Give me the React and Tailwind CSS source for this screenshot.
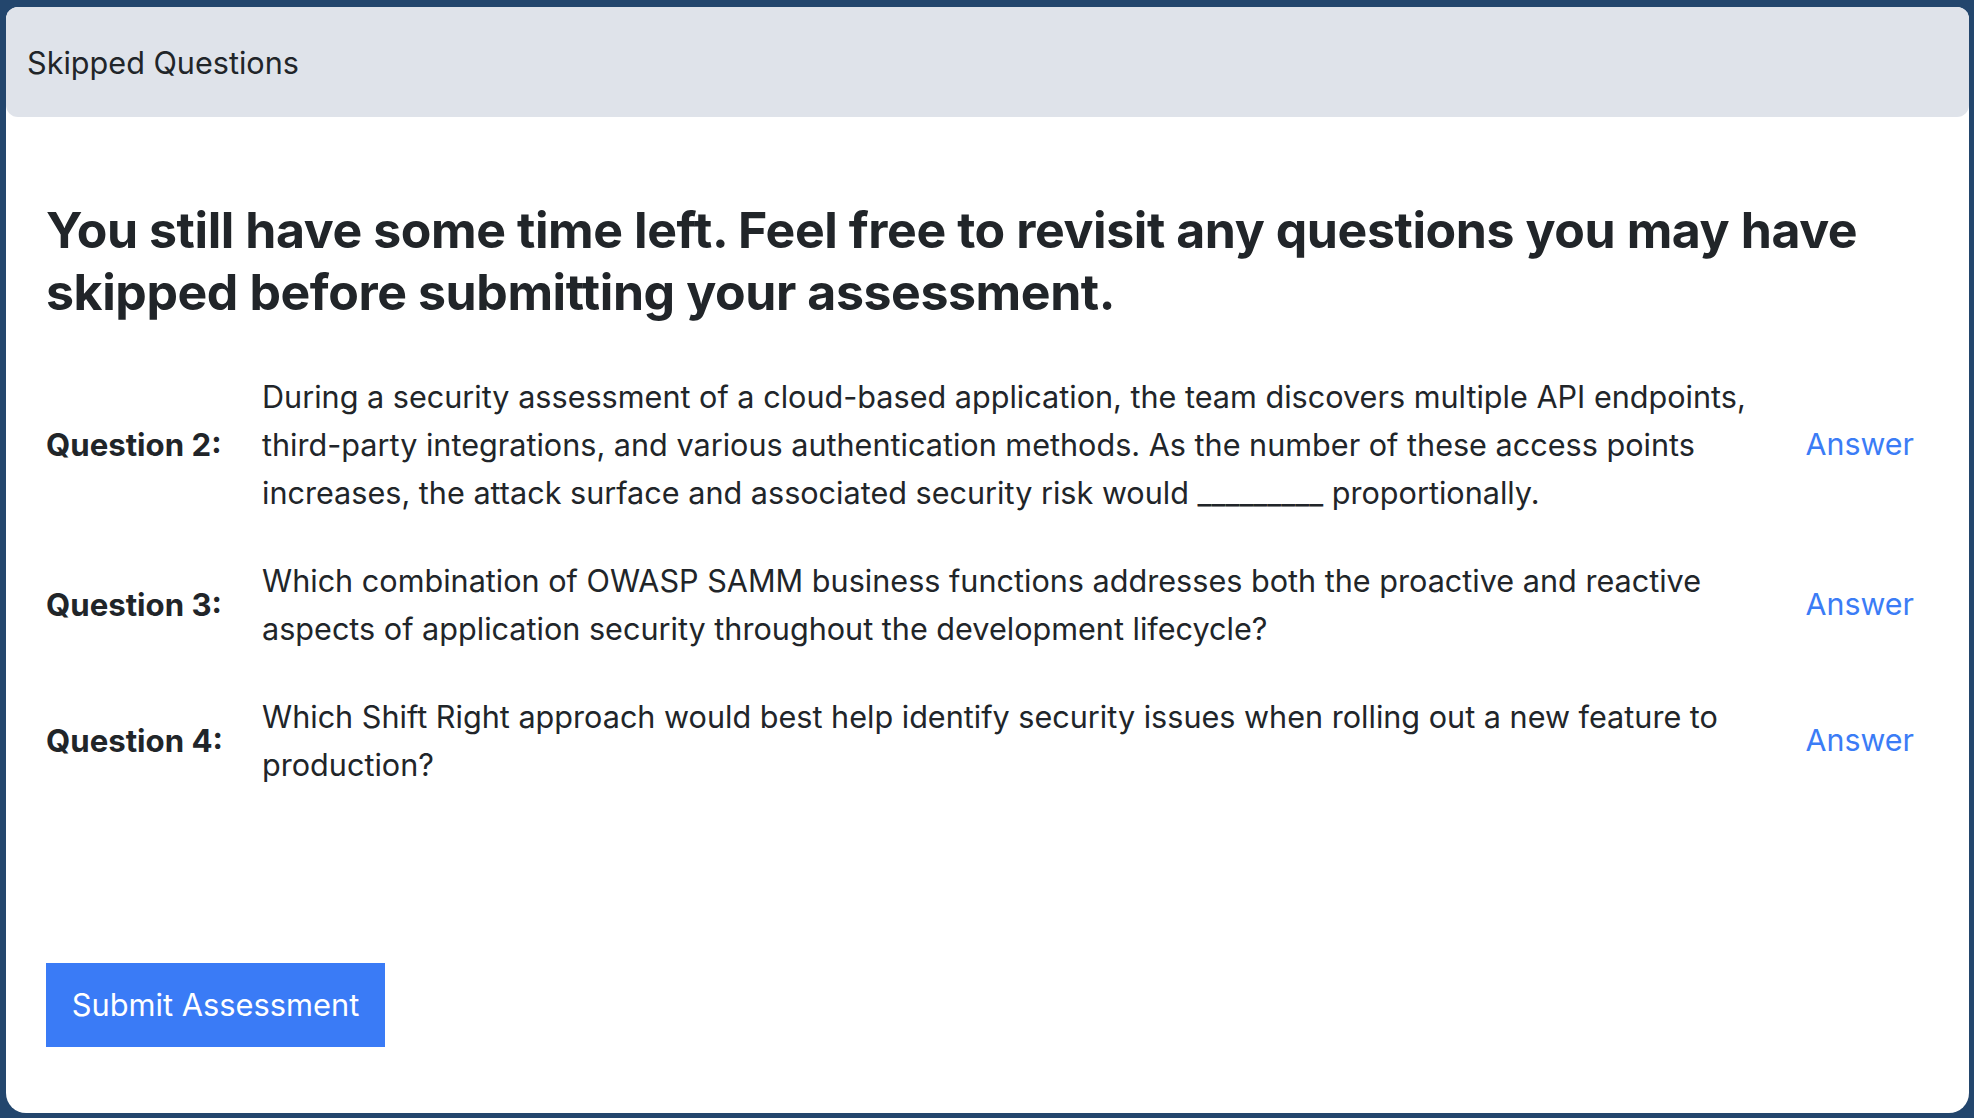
export default function App() {
  const rows = [
    {
      label: "Question 2:",
      text: "During a security assessment of a cloud-based application, the team discovers multiple API endpoints, third-party integrations, and various authentication methods. As the number of these access points increases, the attack surface and associated security risk would _________ proportionally.",
    },
    {
      label: "Question 3:",
      text: "Which combination of OWASP SAMM business functions addresses both the proactive and reactive aspects of application security throughout the development lifecycle?",
    },
    {
      label: "Question 4:",
      text: "Which Shift Right approach would best help identify security issues when rolling out a new feature to production?",
    },
  ];
  return (
    <div
      className="h-[1118px] w-full bg-[#23466d] pt-[7px] pl-[6px] pr-[5px] pb-[5px] flex"
      style={{ fontFamily: "Inter, 'Noto Sans', sans-serif" }}
    >
      <div className="flex-1 bg-white rounded-t-[12px] rounded-b-[20px] flex flex-col text-[#212529]">
        <div className="h-[110px] bg-[#dfe3ea] rounded-[12px] flex items-center pl-[21px] pt-[2px] text-[30.6px]">
          Skipped Questions
        </div>
        <div className="pl-[40px] pr-[55px] pt-[82px]">
          <h2 className="text-[50px] leading-[62px] font-bold tracking-[-0.42px]">
            You still have some time left. Feel free to revisit any questions you may have skipped before submitting your assessment.
          </h2>
          <div className="mt-[50px] flex flex-col gap-[40px]">
            {rows.map((r) => (
              <div key={r.label} className="flex items-center">
                <div className="w-[216px] shrink-0 font-bold text-[31.2px]">{r.label}</div>
                <div className="w-[1520px] shrink-0 text-[30.6px] leading-[48px]">{r.text}</div>
                <div className="flex-1 text-right text-[30.4px] text-[#3b7cf6]">Answer</div>
              </div>
            ))}
          </div>
          <button className="mt-[174px] h-[84px] w-[339px] bg-[#3a7bf6] text-white text-[30.8px]">
            Submit Assessment
          </button>
        </div>
      </div>
    </div>
  );
}
